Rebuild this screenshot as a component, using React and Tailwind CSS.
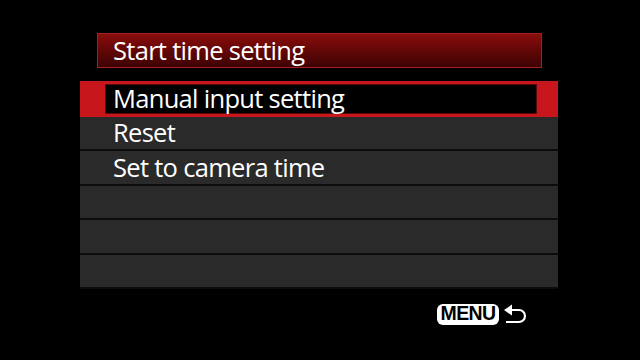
export default function App() {
  const rows = ["Manual input setting", "Reset", "Set to camera time", "", "", ""];
  const txt = "text-white text-[25.5px] leading-none font-medium tracking-[-0.7px]";
  return (
    <div
      className="w-[640px] h-[360px] bg-black overflow-hidden flex flex-col"
      style={{ fontFamily: '"Open Sans", "Noto Sans", sans-serif' }}
    >
      <div className="ml-[97px] mt-[33px] w-[445px] h-[35px] border border-[#a81e1e] bg-gradient-to-b from-[#8a0d0d] to-[#3e0303] flex items-center pl-[15px]">
        <span className={txt}>Start time setting</span>
      </div>
      <div className="ml-[80px] mt-[13px] w-[478px] flex flex-col">
        {rows.map((r, i) =>
          i === 0 ? (
            <div key={i} className="h-[35.5px] bg-[#c8161d] pl-[25px] pr-[21px] pt-[3px] pb-[2.5px]">
              <div className="h-full bg-black border border-[#5a0a0a] flex items-center pl-[7px]">
                <span className={txt}>{r}</span>
              </div>
            </div>
          ) : (
            <div
              key={i}
              className="h-[34.5px] bg-[#2a2a2a] border-b-[2px] border-[#0c0c0c] flex items-center pl-[33px]"
            >
              <span className={txt}>{r}</span>
            </div>
          )
        )}
      </div>
      <div className="ml-[437px] mt-[13px] flex items-center gap-[2px]">
        <div className="w-[62px] h-[21px] bg-white rounded-[6px] flex items-center justify-center">
          <span
            className="text-black text-[19.5px] font-bold leading-none tracking-[-0.6px]"
            style={{ fontFamily: '"Liberation Sans", Arial, sans-serif' }}
          >
            MENU
          </span>
        </div>
        <svg width="28" height="24" viewBox="500 302 28 24">
          <path d="M507 310 H518 A6 6 0 0 1 518 322 H505" fill="none" stroke="white" strokeWidth="2.2" />
          <polygon points="503,310 511,304.5 511,315.5" fill="white" />
        </svg>
      </div>
    </div>
  );
}
